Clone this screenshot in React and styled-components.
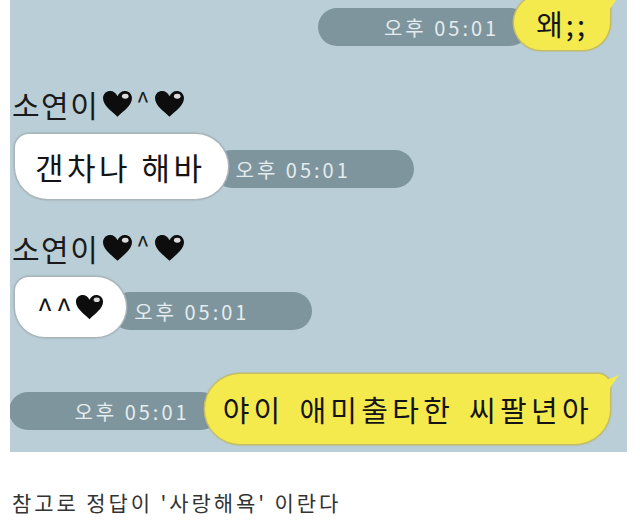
import styled, { createGlobalStyle } from "styled-components";

const GlobalStyle = createGlobalStyle`
  body {
    margin: 0;
    background: #ffffff;
    font-family: "Noto Sans CJK KR", "Noto Sans", sans-serif;
  }
`;

const Page = styled.div`
  width: 640px;
  height: 527px;
  overflow: hidden;
  background: #ffffff;
`;

const ChatPanel = styled.div`
  margin-left: 10px;
  width: 617px;
  height: 452px;
  box-sizing: border-box;
  background: #b9ced7;
  display: flex;
  flex-direction: column;
  overflow: hidden;
`;

const Row = styled.div`
  display: flex;
  align-items: flex-start;
  justify-content: ${(p) => (p.mine ? "flex-end" : "flex-start")};
  padding: ${(p) => (p.mine ? "0 17px 0 0" : "0 0 0 5px")};
  margin-top: ${(p) => p.gap}px;
`;

const Name = styled.div`
  display: flex;
  align-items: center;
  margin-top: ${(p) => p.gap}px;
  padding-left: 2px;
  font-size: 30px;
  line-height: 34px;
  color: #1a1a1a;
  letter-spacing: 1.5px;
  gap: 3px;
`;

const Caret = styled.span`
  font-size: 24px;
  margin-top: -8px;
`;

const Bubble = styled.div`
  position: relative;
  z-index: 2;
  height: ${(p) => p.h}px;
  box-sizing: border-box;
  display: flex;
  align-items: center;
  padding: ${(p) => p.pad};
  border-radius: ${(p) =>
    p.mine
      ? `${p.h / 2}px 12px ${p.h / 2}px ${p.h / 2}px`
      : `14px ${p.h / 2}px ${p.h / 2}px ${p.h / 2}px`};
  background: ${(p) => (p.mine ? "#f4ea4e" : "#ffffff")};
  box-shadow: ${(p) =>
    p.mine
      ? "0 0 0 1.5px #c4bd68, 0 0 3px rgba(90, 90, 40, 0.35)"
      : "0 0 0 1.5px #a9b5b9, 0 0 3px rgba(60, 70, 75, 0.3)"};
  font-size: ${(p) => p.size || 29}px;
  letter-spacing: ${(p) => p.ls || 3}px;
  word-spacing: ${(p) => p.words || 0}px;
  color: #141414;
  white-space: nowrap;

  ${(p) =>
    p.mine &&
    `
    &::after {
      content: "";
      position: absolute;
      top: 1px;
      right: -9px;
      width: 18px;
      height: 18px;
      background: #f4ea4e;
      clip-path: polygon(0 40%, 100% 0, 30% 100%);
    }
  `}
`;

const TimePill = styled.div`
  position: relative;
  z-index: 1;
  height: 38px;
  margin-top: ${(p) => p.top}px;
  ${(p) => (p.mine ? "margin-right: -15px;" : "margin-left: -15px;")}
  padding: ${(p) => p.pad};
  box-sizing: border-box;
  display: flex;
  align-items: center;
  flex-shrink: 0;
  border-radius: 19px;
  background: #7f959e;
  color: #e4ecee;
  font-size: 20px;
  letter-spacing: 3px;
  white-space: nowrap;
`;

const Footer = styled.div`
  margin-top: 36px;
  padding-left: 12px;
  font-size: 21px;
  line-height: 28px;
  letter-spacing: 2.9px;
  color: #333333;
`;

function Heart({ size = 28 }) {
  return (
    <svg width={size} height={size * 0.9} viewBox="0 0 30 27">
      <path
        d="M15 26 C 9 20, 1 15, 1 8 C 1 3.5, 4.5 1, 8 1 C 11 1, 13.5 3, 15 6 C 16.5 3, 19 1, 22 1 C 25.5 1, 29 3.5, 29 8 C 29 15, 21 20, 15 26 Z"
        fill="#0d0d0d"
      />
      <ellipse cx="22.5" cy="6" rx="3.2" ry="2.4" fill="#ffffff" opacity="0.85" />
    </svg>
  );
}

function SenderName({ gap }) {
  return (
    <Name gap={gap}>
      소연이
      <Heart size={31} />
      <Caret>^</Caret>
      <Heart size={31} />
    </Name>
  );
}

export default function App() {
  return (
    <Page>
      <GlobalStyle />
      <ChatPanel>
        <Row mine gap={-5}>
          <TimePill mine top={13} pad="0 30px 0 66px">
            오후 05:01
          </TimePill>
          <Bubble mine h={55} pad="0 22px 0 22px">
            왜;;
          </Bubble>
        </Row>

        <SenderName gap={37} />
        <Row gap={13}>
          <Bubble h={65} size={31} ls={3.5} pad="0 22px 0 20px">
            갠차나 해바
          </Bubble>
          <TimePill top={16} pad="0 63px 0 23px">
            오후 05:01
          </TimePill>
        </Row>

        <SenderName gap={32} />
        <Row gap={12}>
          <Bubble h={60} pad="0 22px 0 22px">
            ^^
            <Heart size={29} />
          </Bubble>
          <TimePill top={15} pad="0 63px 0 23px">
            오후 05:01
          </TimePill>
        </Row>

        <Row mine gap={37}>
          <TimePill mine top={18} pad="0 30px 0 65px">
            오후 05:01
          </TimePill>
          <Bubble mine h={70} ls={4.3} words={4} pad="0 17px 0 18px">
            야이 애미출타한 씨팔년아
          </Bubble>
        </Row>
      </ChatPanel>
      <Footer>참고로 정답이 '사랑해욕' 이란다</Footer>
    </Page>
  );
}
